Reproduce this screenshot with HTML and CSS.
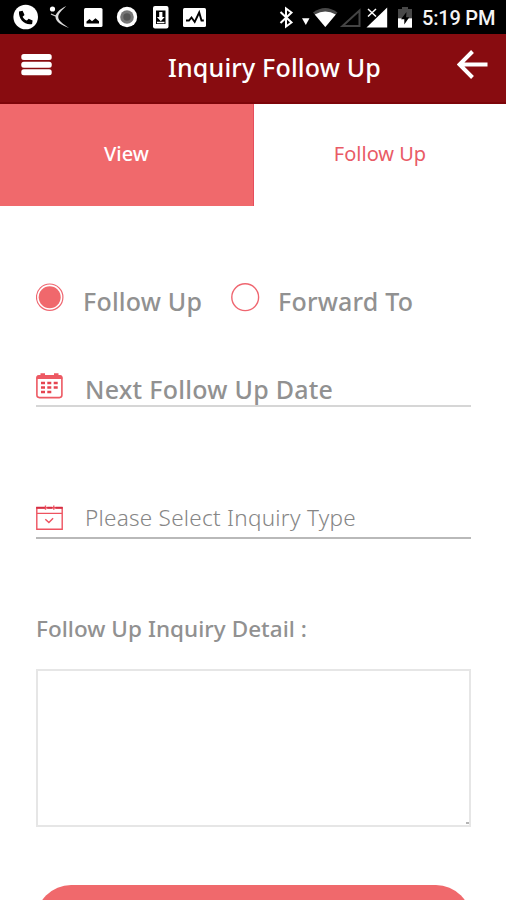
FILE: index.html
```html
<!DOCTYPE html>
<html lang="en">
<head>
<meta charset="utf-8">
<title>Inquiry Follow Up</title>
<link rel="stylesheet" href="styles.css">
</head>
<body>
<div class="status">
  <div class="status-icons">
    <svg width="32" height="34" viewBox="12 0 32 34"><circle cx="25.7" cy="17" r="12.3" fill="#fff"/><path d="M19 11.600l3.600-.8 1.900 4.200-1.900 1.700c1 2 2.200 2.900 4.300 3.900l1.700-1.800 4 1.800-.5 3.500c-7.600 1.300-13.800-5-13.100-12.500z" fill="#000"/></svg>
    <svg width="32" height="34" viewBox="44 0 32 34"><circle cx="52.500" cy="9" r="2.600" fill="#fff"/><path d="M66.300 6C59 9.500 55.500 13.500 55.500 17c0 4 5 8 13.500 11-6-4-10.800-7.500-10.800-11 0-3.500 4-7 8.100-11z" fill="#ddd"/><path d="M51 14l4.500 2 1.500-1.500" fill="none" stroke="#ccc" stroke-width="1.200"/></svg>
    <svg width="34" height="34" viewBox="76 0 34 34"><rect x="84" y="8" width="18.500" height="19" rx="1.500" fill="#fff"/><path d="M86.500 23.500v-2l3-2.500 2.500 2.300 3.500-3 3.500 3v2.200z" fill="#000"/></svg>
    <svg width="34" height="34" viewBox="110 0 34 34"><circle cx="127" cy="17" r="10.200" fill="#fff"/><circle cx="127" cy="17" r="6.800" fill="#777"/><circle cx="127" cy="17" r="3.700" fill="#555"/></svg>
    <svg width="34" height="34" viewBox="144 0 34 34"><rect x="153" y="6" width="15.500" height="22.500" rx="2" fill="#fff"/><path d="M156 10.500h9.500v13.500H156z" fill="#000"/><path d="M159.200 12h3.200v5h2.300l-3.900 4.200-3.900-4.200h2.300zM157 21.700h7.500v1.500H157z" fill="#fff"/></svg>
    <svg width="32" height="34" viewBox="178 0 32 34"><rect x="183" y="8" width="23" height="19" rx="1.500" fill="#fff"/><path d="M186 20.500h3l2.500-3 3.200 4.500 4.500-9.500 2.300 8h2.300" fill="none" stroke="#000" stroke-width="1.900"/></svg>
  </div>
  <div class="status-info">
    <svg width="22" height="34" viewBox="275 0 22 34"><path d="M280.500 12l11 10.500-5.500 4V8.500l5.500 4L280.500 23" fill="none" stroke="#fff" stroke-width="2"/></svg>
    <svg width="15" height="34" viewBox="297 0 15 34"><path d="M302 18.300h7.500l-3.700 6.700z" fill="#fff"/></svg>
    <svg width="27" height="34" viewBox="312 0 27 34"><path d="M313 12.500Q325.300 3.500 337.500 12.500L325.300 27z" fill="#484848"/><path d="M314.800 14.500Q325.300 8.500 335.800 14.500L325.300 27z" fill="#fff"/></svg>
    <svg width="25" height="34" viewBox="339 0 25 34"><path d="M342.500 26h17V10.500z" fill="none" stroke="#444" stroke-width="2"/></svg>
    <svg width="29" height="34" viewBox="364 0 29 34"><path d="M366.500 27.500h20.700V7.500z" fill="#fff"/><path d="M368 9l8 7.500m0-7.500l-8 7.500" stroke="#000" stroke-width="4"/><path d="M368 9l8 7.500m0-7.500l-8 7.500" stroke="#fff" stroke-width="1.500"/></svg>
    <svg width="24" height="34" viewBox="393 0 24 34"><path d="M398 9h4V7h6v2h4v9.500h-14z" fill="#484848"/><path d="M398 18.300h14v9.400h-14z" fill="#fff"/><path d="M406.500 12l-5.500 7.300h3.300v5.200l5-7.200h-3.200z" fill="#000"/></svg>
    <span class="clock">5:19 PM</span>
  </div>
</div>
<header class="bar">
  <svg class="menu" width="31" height="22" viewBox="0 0 31 22" fill="#fff"><rect x=".3" width="30.400" height="6" rx="2.500"/><rect x=".3" y="7.700" width="30.400" height="6" rx="2.500"/><rect x=".3" y="15.300" width="30.400" height="6" rx="2.500"/></svg>
  <h1 class="title">Inquiry Follow Up</h1>
  <svg class="back" width="31" height="30" viewBox="0 0 31 30" fill="none" stroke="#fff" stroke-width="4"><path d="M30.500 14.500H3M15.500 1.500L2.500 14.500l13 13"/></svg>
</header>
<nav class="tabs">
  <div class="tab tab-view"><span>View</span></div>
  <div class="tab tab-follow"><span>Follow Up</span></div>
</nav>
<main class="form">
  <div class="radios">
    <svg width="29" height="29" viewBox="0 0 29 29"><circle cx="13.700" cy="14.200" r="13.200" fill="none" stroke="#ef6670" stroke-width="1.200"/><circle cx="13.700" cy="14.200" r="11" fill="#f0686c"/></svg>
    <span class="radio-label first">Follow Up</span>
    <svg width="29" height="29" viewBox="0 0 29 29"><circle cx="14.200" cy="14.200" r="13.400" fill="none" stroke="#ef6670" stroke-width="1.400"/></svg>
    <span class="radio-label second">Forward To</span>
  </div>
  <div class="field date">
    <svg width="27" height="26" viewBox="0 0 27 26"><rect x=".9" y="2.900" width="25" height="21.700" rx="2.500" fill="none" stroke="#ed5963" stroke-width="1.600"/><path d="M.5 6V4.500Q.5 2.200 3 2.200H4.500V.3H9v1.900h9V.3h4.500v1.900H24q2.400 0 2.400 2.300V6z" fill="#ed5963"/><path d="M5 10h4M11.300 10h4M17.700 10h4M5 14.600h4M11.300 14.600h4M17.700 14.600h4M5 19h4M11.300 19h4" stroke="#e64450" stroke-width="2.500"/></svg>
    <span class="date-text">Next Follow Up Date</span>
  </div>
  <div class="field type">
    <svg width="27" height="26" viewBox="0 0 27 26" fill="none" stroke="#ee5360" stroke-width="1.400"><path d="M.8 2.800h25.400v21.400H.8zM.8 8.400h25.400"/><path d="M.2 2.800h9m2 0h5.200m3 0h7.200" stroke="#d52e43" stroke-width="2"/><path d="M9.500.5v4.200M17.800.5v4.200M9.300 14.200l3.600 3.400 4.200-4.400"/></svg>
    <span class="type-text">Please Select Inquiry Type</span>
  </div>
  <label class="detail-label">Follow Up Inquiry Detail :</label>
  <div class="textarea"><i class="grip"></i></div>
  <div class="submit"></div>
</main>
</body>
</html>
```
FILE: styles.css
```css
* { box-sizing: border-box; }
body {
  margin: 0;
  height: 900px;
  overflow: hidden;
  background: #fff;
  color: #919191;
  font-family: "Noto Sans", "Open Sans", sans-serif;
}
svg { display: block; flex: none; }
span, h1 { white-space: nowrap; }
.status {
  height: 34px;
  padding: 0 11px 0 12px;
  display: flex;
  justify-content: space-between;
  background: #000;
}
.status-icons, .status-info { display: flex; }
.clock {
  width: 78px;
  padding-left: 5px;
  color: #f4f4f4;
  font: 500 20px/36px Roboto, sans-serif;
  letter-spacing: -.2px;
}
.bar {
  height: 70px;
  padding: 0 18px 0 21px;
  display: flex;
  align-items: flex-start;
  justify-content: space-between;
  background: #880c10;
  border-bottom: 2px solid #7d0509;
}
.menu { margin-top: 20px; }
.title {
  margin: 16px 0 0 40px;
  color: #fff;
  font-size: 25px;
  line-height: 34px;
  font-weight: 500;
  letter-spacing: .17px;
}
.back { margin-top: 16px; }
.tabs { display: flex; height: 102px; }
.tab {
  display: flex;
  justify-content: center;
  font-size: 20px;
  line-height: 28px;
  padding-top: 36px;
}
.tab-view {
  width: 254px;
  background: #f0696c;
  border-right: 1px solid #e64d5c;
  color: #fff;
  font-weight: 500;
}
.tab-follow { flex: 1; color: #e95b66; }
.form { padding: 77px 35px 0 36px; }
.radios { display: flex; height: 36px; }
.radio-label {
  font-size: 25px;
  line-height: 37px;
  font-weight: 500;
  letter-spacing: .2px;
}
.radio-label.first { width: 166px; padding-left: 18px; }
.radio-label.second { padding-left: 18px; }
.field { display: flex; }
.date {
  margin-top: 54px;
  height: 34px;
  border-bottom: 2px solid #d6d6d6;
}
.date-text {
  margin-left: 22px;
  font-size: 25px;
  line-height: 32px;
  font-weight: 500;
  letter-spacing: .26px;
}
.type {
  margin-top: 98px;
  height: 34px;
  border-bottom: 2px solid #b9b9b9;
}
.type-text {
  margin-left: 22px;
  color: #868686;
  font-size: 22.500px;
  line-height: 26px;
  font-weight: 300;
  letter-spacing: .26px;
}
.detail-label {
  display: block;
  margin-top: 74px;
  font-size: 22.500px;
  line-height: 32px;
  font-weight: 500;
  letter-spacing: .04px;
}
.textarea {
  margin-top: 24px;
  height: 158px;
  border: 2px solid #e6e6e6;
  display: flex;
  align-items: flex-end;
  justify-content: flex-end;
}
.grip { width: 3px; height: 2px; margin: 0 0 1px; background: #b5b5b5; }
.submit {
  margin-top: 58px;
  height: 70px;
  border-radius: 35px;
  background: #f0696c;
}
```
